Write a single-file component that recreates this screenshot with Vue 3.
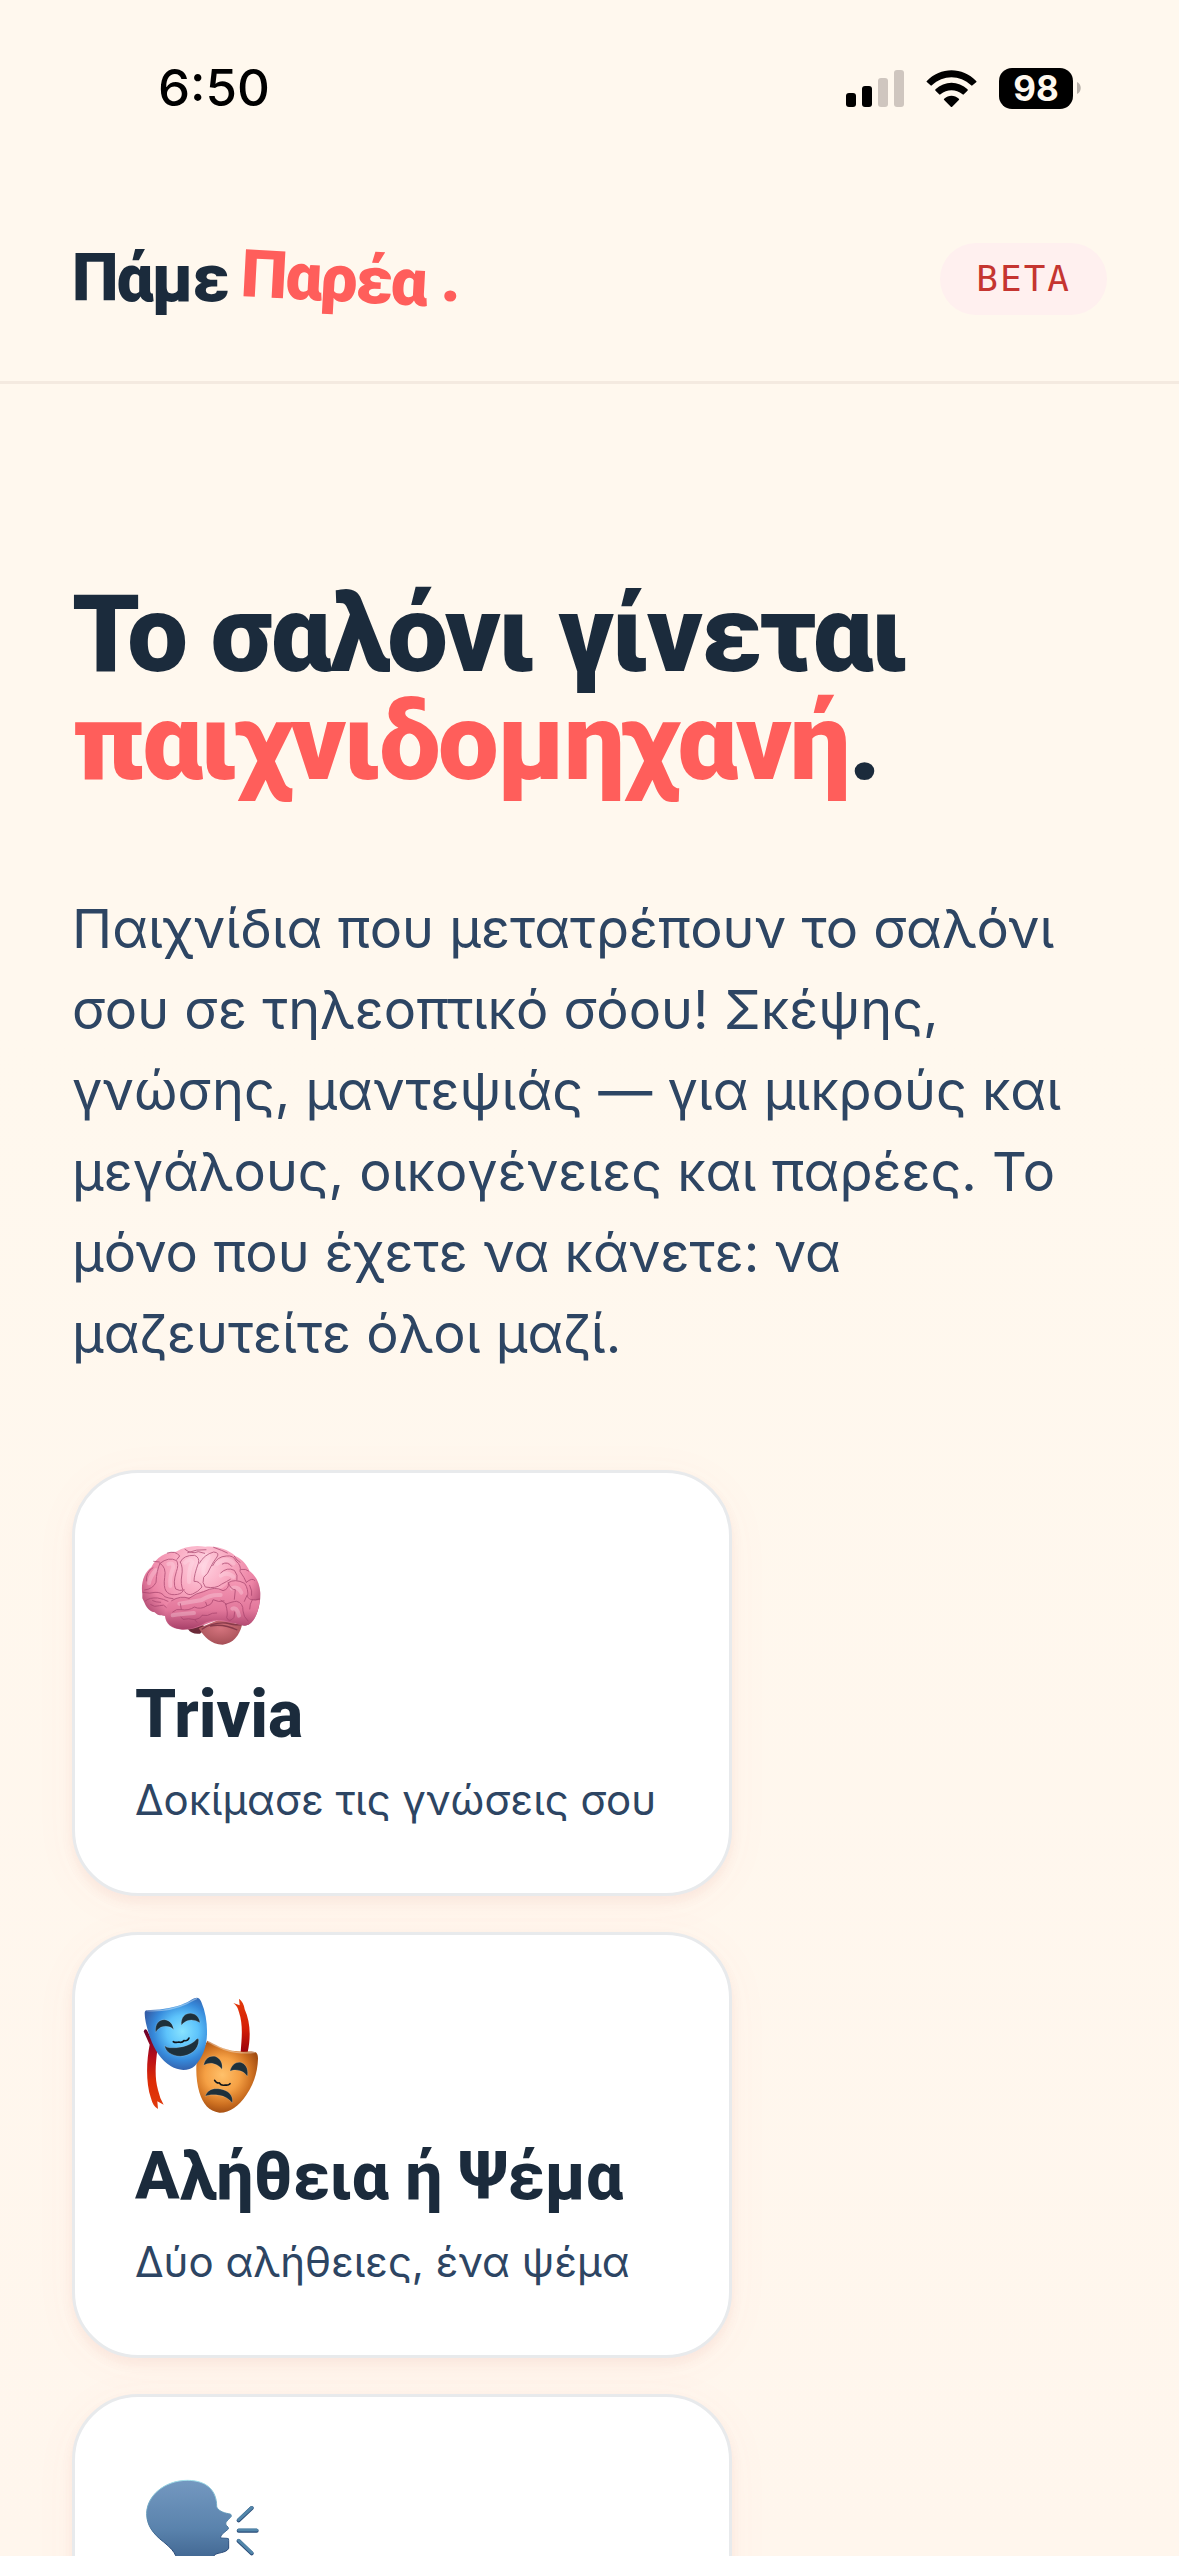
<template>
  <div class="page">
    <div class="status-bar">
      <span class="time">6:50</span>
      <div class="status-icons">
        <svg
          class="signal"
          viewBox="0 0 58 37"
        >
          <rect x="0" y="23" width="10" height="14" rx="3" />
          <rect x="16" y="16" width="10" height="21" rx="3" />
          <rect x="32" y="8" width="10" height="29" rx="3" class="dim" />
          <rect x="48" y="0" width="10" height="37" rx="3" class="dim" />
        </svg>
        <svg
          class="wifi"
          viewBox="0 0 150 111"
        >
          <path d="M1 33C42 -10 108 -10 149 33Q151 35 149 37L138 46Q136 48 134 46C100 14 50 14 16 46Q14 48 12 46L1 36Q-1 35 1 33Z" />
          <path d="M27 58C54 32 96 32 123 58Q125 60 123 62L112 73Q110 75 108 73C88 57 62 57 42 73Q40 75 38 73L27 62Q25 60 27 58Z" />
          <path d="M53 86C66 74 84 74 97 86Q99 88 97 90L77 110Q75 112 73 110L53 90Q51 88 53 86Z" />
        </svg>
        <div class="battery">
          <span class="battery-level">98</span>
          <svg
            class="battery-tip"
            viewBox="0 0 4 12"
          >
            <path d="M0 0C5 2 5 10 0 12Z" />
          </svg>
        </div>
      </div>
    </div>

    <header class="header">
      <a
        href="#"
        class="logo"
      >
        <span>Πάμε</span>
        <span class="logo-tilt">Παρέα</span>
        <span class="logo-dot">.</span>
      </a>
      <span class="badge">BETA</span>
    </header>

    <main class="hero">
      <h1 class="title">
        Το σαλόνι γίνεται<br>
        <span class="accent">παιχνιδομηχανή</span>.
      </h1>
      <p class="lead">
        Παιχνίδια που μετατρέπουν το σαλόνι σου σε τηλεοπτικό σόου! Σκέψης, γνώσης, μαντεψιάς — για μικρούς και μεγάλους, οικογένειες και παρέες. Το μόνο που έχετε να κάνετε: να μαζευτείτε όλοι μαζί.
      </p>

      <div class="games">
        <article
          v-for="game in games"
          :key="game.id"
          class="game-card"
        >
          <svg
            v-if="game.id === 'trivia'"
            class="game-icon"
            viewBox="45 39 378 360"
          >
            <defs>
              <radialGradient id="brain-fill" gradientUnits="userSpaceOnUse" cx="245" cy="135" r="215">
                <stop offset="0" stop-color="#ffd3e1" />
                <stop offset="0.4" stop-color="#f9a9c1" />
                <stop offset="0.75" stop-color="#ec83a5" />
                <stop offset="1" stop-color="#b04a72" />
              </radialGradient>
              <linearGradient id="lobe-fill" x1="0" y1="0" x2="0" y2="1">
                <stop offset="0" stop-color="#f597b4" />
                <stop offset="0.6" stop-color="#e2779b" />
                <stop offset="1" stop-color="#a84069" />
              </linearGradient>
              <radialGradient id="stem-fill" cx="0.5" cy="0.35" r="0.65">
                <stop offset="0" stop-color="#d5747e" />
                <stop offset="1" stop-color="#a54f56" />
              </radialGradient>
            </defs>
            <path d="M204 328Q215 344 240 341L262 322L240 312Z" fill="#6b2a38" />
            <path d="M236 325C252 350 272 374 308 374C340 371 358 346 366 316L300 298Z" fill="url(#stem-fill)" />
            <path d="M245 328Q278 306 318 309Q350 317 365 314M270 318Q310 310 352 330" fill="none" stroke="#87394a" stroke-width="4" />
            <path d="M67 222C62 190 72 158 94 142C108 112 138 95 168 95C192 80 225 74 256 80C290 77 323 87 346 108C370 119 382 138 388 152C410 170 419 190 421 218C422 254 412 288 394 306C384 318 371 320 362 314C342 310 310 302 290 302C258 309 230 330 186 329C154 326 137 312 135 288C119 288 110 284 104 277C82 275 76 253 67 235Z" fill="url(#brain-fill)" />
            <path d="M155 242C178 228 205 236 218 229C236 218 258 206 285 207C306 210 314 200 325 188C340 178 368 184 378 202C386 218 384 232 396 240C416 244 420 236 419 244C415 275 406 300 389 312C372 324 355 307 330 307C302 296 280 300 259 307C230 324 196 333 169 325C139 313 130 283 139 263C141 252 146 246 155 242Z" fill="url(#lobe-fill)" />
            <g class="brain-glow">
              <path d="M145 132Q160 126 160 142Q148 170 151 198M195 128Q209 113 217 126Q205 150 207 186M253 106Q268 100 265 114Q248 137 250 161M292 131Q320 109 341 130M302 167Q321 153 341 171" />
              <path d="M108 150Q90 169 87 190M178 251Q215 245 245 240Q270 223 302 225M335 205Q354 197 364 218M337 266Q350 259 357 287M158 286Q185 281 222 279" />
            </g>
            <g class="brain-folds">
              <path d="M79 183Q77 157 99 143M74 210Q99 207 108 187Q110 150 120 130" />
              <path d="M120 130Q146 109 170 122Q177 135 169 155Q158 190 167 207Q177 214 193 210M120 130Q140 142 134 172Q130 200 138 213Q147 225 163 224Q183 224 189 213" />
              <path d="M181 126Q190 105 224 106Q240 113 235 130Q222 165 222 184Q240 183 246 201Q235 215 218 222Q203 228 194 215M181 126Q190 142 185 168Q181 193 189 210" />
              <path d="M238 130Q252 104 281 96Q300 98 291 111Q280 125 272 141Q264 163 251 172Q245 189 256 201Q288 207 304 193Q321 184 331 178" />
              <path d="M278 137Q291 109 319 108Q340 105 348 123Q365 137 360 154Q374 174 379 187M302 159Q321 140 343 151Q355 165 351 180M307 132Q323 123 335 139" />
              <path d="M118 126L101 124M142 99Q167 91 179 108L171 118M195 88Q214 104 235 95L254 100M203 98Q229 87 258 89M281 82Q309 92 322 99M343 109Q350 122 360 127M363 148Q379 146 386 153M379 187Q396 172 404 181" />
              <path d="M69 217Q91 222 105 217Q126 216 134 230Q146 235 159 236M77 242Q89 232 113 234Q132 237 144 244M92 254Q103 263 119 257Q132 251 139 262M98 242Q107 247 122 247" />
              <path d="M155 242Q182 225 207 235M207 235Q228 219 251 215Q285 197 309 212Q328 207 325 188Q345 175 374 190Q386 207 383 231Q390 245 419 237" />
              <path d="M158 276Q169 265 184 269L181 251M184 269Q206 273 223 261Q242 270 261 257L257 247M261 257Q276 255 279 239Q296 248 312 243M190 298Q205 294 224 299Q241 297 247 286M224 299L231 307M247 286Q263 290 277 280L290 279M183 292L190 298" />
              <path d="M325 188Q332 210 346 209L343 238M317 253Q339 244 350 244Q370 249 369 273Q370 290 384 303M317 253Q325 279 320 293Q328 310 342 292L344 276M373 244L381 226M303 241L320 253M397 239Q389 252 389 267M389 196Q398 214 395 226" />
            </g>
          </svg>

          <svg
            v-else-if="game.id === 'lies'"
            class="game-icon"
            viewBox="45 75 378 360"
          >
            <defs>
              <radialGradient id="blue-mask" gradientUnits="userSpaceOnUse" cx="187" cy="184" r="120">
                <stop offset="0" stop-color="#88e3ff" />
                <stop offset="0.4" stop-color="#5dc3fb" />
                <stop offset="0.72" stop-color="#3689da" />
                <stop offset="1" stop-color="#345ea8" />
              </radialGradient>
              <radialGradient id="gold-mask" gradientUnits="userSpaceOnUse" cx="307" cy="315" r="116">
                <stop offset="0" stop-color="#ffc16b" />
                <stop offset="0.45" stop-color="#f5a044" />
                <stop offset="0.75" stop-color="#cf7222" />
                <stop offset="1" stop-color="#a34d12" />
              </radialGradient>
              <linearGradient id="ribbon-left" x1="0" y1="0" x2="0" y2="1">
                <stop offset="0" stop-color="#66002b" />
                <stop offset="0.35" stop-color="#b70e19" />
                <stop offset="0.65" stop-color="#dd2c06" />
                <stop offset="1" stop-color="#e13b0d" />
              </linearGradient>
              <linearGradient id="ribbon-right" x1="0" y1="0" x2="0" y2="1">
                <stop offset="0" stop-color="#e33b0b" />
                <stop offset="0.55" stop-color="#d51e05" />
                <stop offset="1" stop-color="#98000d" />
              </linearGradient>
            </defs>
            <path d="M71 184Q75 174 81 181L112 240C107 280 103 321 114 360Q119 384 131 404L112 394L114 417Q99 410 93 385C76 334 80 270 89 224Z" fill="url(#ribbon-left)" />
            <path d="M340 99L359 106L357 86Q371 96 374 118C391 155 393 201 383 247H362C365 206 370 165 357 127Q353 108 340 99Z" fill="url(#ribbon-right)" />
            <path d="M262 212C283 221 307 240 353 244C374 247 400 242 409 248Q414 252 414 266C413 305 401 344 379 375C356 410 328 429 298 428C267 424 249 403 238 367C230 341 227 301 230 276Z" fill="url(#gold-mask)" />
            <path d="M74 129Q74 119 86 120C123 121 168 112 194 100C211 92 222 83 230 83Q239 83 244 96C257 126 262 160 261 193C260 229 248 265 225 287C205 305 174 302 153 289C123 271 103 239 91 205C81 176 74 148 74 129Z" fill="url(#blue-mask)" />
            <path d="M80 122C126 125 172 114 200 101Q224 88 231 85M263 214C285 227 314 243 350 247Q377 250 406 247" fill="none" stroke="#ffffff" stroke-opacity="0.38" stroke-width="4" />
            <g class="mask-face">
              <path d="M107 187C104 159 119 148 134 149C151 151 159 164 161 179Q152 169 137 169C121 169 113 178 107 187Z" />
              <path d="M184 166C182 140 197 129 213 130C230 132 238 144 240 158Q228 150 214 150C199 151 191 157 184 166Z" />
              <path d="M134 227Q140 233 149 233C180 235 212 228 230 207Q236 202 236 211C236 239 212 257 181 259C153 257 137 244 134 227Z" />
              <path d="M251 286C255 264 270 256 285 259C302 265 309 282 306 298Q296 284 281 281C269 278 260 281 251 286Z" />
              <path d="M330 304C335 282 350 274 365 278C382 285 385 304 382 319Q374 306 360 302C348 299 339 299 330 304Z" />
              <path d="M256 379C261 360 279 353 300 357C326 361 341 377 337 399Q321 379 297 376C279 373 264 375 256 379Z" />
            </g>
            <path d="M160 215Q167 219 177 216Q186 219 192 212Q203 214 207 204M284 331Q289 340 298 339Q304 348 315 345Q325 347 330 341" class="mask-nose" />
          </svg>

          <svg
            v-else
            class="game-icon"
            viewBox="45 21 378 360"
          >
            <defs>
              <linearGradient id="head-fill" x1="0" y1="0" x2="0" y2="1">
                <stop offset="0" stop-color="#7498c0" />
                <stop offset="0.5" stop-color="#5a83ad" />
                <stop offset="1" stop-color="#345783" />
              </linearGradient>
              <linearGradient id="head-edge" x1="0" y1="0" x2="0" y2="1">
                <stop offset="0" stop-color="#a1dfea" />
                <stop offset="0.35" stop-color="#6297b8" />
                <stop offset="0.7" stop-color="#264776" />
              </linearGradient>
            </defs>
            <path d="M202 91C132 91 80 139 80 191C80 225 98 251 131 276Q161 300 167 317L170 379H282V317C289 306 318 311 326 295L326 271Q327 264 321 265L302 264Q300 259 308 251L325 237Q327 232 319 226Q313 219 326 208L334 199Q335 191 326 191C310 189 291 180 290 169C290 119 258 91 202 91Z" fill="url(#head-fill)" stroke="url(#head-edge)" stroke-width="3" />
            <g class="speech">
              <path d="M356 211L395 174M356 242H410M356 273L395 310" class="speech-shade" />
              <path d="M356 209L395 173M356 240H410M356 271L395 308" />
            </g>
          </svg>

          <h2
            v-if="game.title"
            class="game-title"
          >
            {{ game.title }}
          </h2>
          <p
            v-if="game.text"
            class="game-text"
          >
            {{ game.text }}
          </p>
        </article>
      </div>
    </main>
  </div>
</template>

<script setup>
const games = [
  { id: "trivia", title: "Trivia", text: "Δοκίμασε τις γνώσεις σου" },
  { id: "lies", title: "Αλήθεια ή Ψέμα", text: "Δύο αλήθειες, ένα ψέμα" },
  { id: "talk" },
];
</script>

<style>
body {
  margin: 0;
  background-color: #fff8ee;
}
</style>

<style scoped>
.page {
  height: 100vh;
  overflow: hidden;
  background: linear-gradient(#fff8ee 40%, #fff6ed);
  color: #1b2b3c;
  font-family: Inter, "Noto Sans", sans-serif;
}

.status-bar {
  display: flex;
  align-items: center;
  justify-content: space-between;
  height: 176px;
  padding: 0 98px 0 158px;
  box-sizing: border-box;
  color: #000000;
}

.time {
  font-size: 51px;
  font-weight: 500;
  line-height: 60px;
}

.status-icons {
  display: flex;
  align-items: center;
  gap: 22px;
}

.signal {
  width: 58px;
  height: 37px;
}

.dim {
  fill: #cfc6bf;
}

.wifi {
  width: 51px;
  height: 37px;
}

.battery {
  display: flex;
  align-items: center;
  gap: 4px;
}

.battery-level {
  width: 74px;
  border-radius: 13px;
  background-color: #000000;
  color: #fff8ee;
  font-size: 35px;
  font-weight: 700;
  line-height: 41px;
  text-align: center;
}

.battery-tip {
  width: 4px;
  height: 12px;
  fill: #b8b1aa;
}

.header {
  display: flex;
  align-items: center;
  justify-content: space-between;
  height: 208px;
  padding: 0 72px;
  box-sizing: border-box;
  border-bottom: 3px solid #f4eae0;
}

.logo {
  display: flex;
  align-items: baseline;
  gap: 14px;
  color: #1b2b3c;
  font-family: Roboto, sans-serif;
  font-size: 66px;
  font-weight: 900;
  letter-spacing: -2px;
  line-height: 72px;
  text-decoration: none;
}

.logo-tilt {
  display: inline-block;
  color: #ff5e5b;
  transform: rotate(3deg);
}

.logo-dot {
  color: #ff5e5b;
}

.badge {
  padding: 0 36px;
  border-radius: 36px;
  background-color: #fff0ef;
  color: #c53530;
  font-family: "DejaVu Sans Mono", monospace;
  font-size: 36px;
  letter-spacing: 2px;
  line-height: 72px;
}

.hero {
  padding: 196px 72px 0;
}

.title {
  margin: 0;
  font-family: Roboto, sans-serif;
  font-size: 108px;
  font-weight: 900;
  letter-spacing: -2px;
  line-height: 108px;
}

.accent {
  color: #ff5e5b;
}

.lead {
  margin: 92px 0 96px;
  color: #2d4563;
  font-size: 54px;
  line-height: 81px;
}

.games {
  display: flex;
  flex-direction: column;
  align-items: flex-start;
  gap: 36px;
}

.game-card {
  width: 660px;
  max-width: 100%;
  min-height: 426px;
  padding: 60px;
  box-sizing: border-box;
  border: 3px solid #e8eaec;
  border-radius: 66px;
  background-color: #ffffff;
  box-shadow: 0 6px 12px rgba(180, 70, 50, 0.07), 0 6px 48px rgba(255, 94, 91, 0.04);
}

.game-icon {
  display: block;
  width: 126px;
  height: 120px;
}

.brain-glow {
  fill: none;
  stroke: #ffe4ed;
  stroke-width: 12;
  stroke-linecap: round;
  opacity: 0.3;
}

.brain-folds {
  fill: none;
  stroke: #a5426b;
  stroke-width: 3;
  stroke-linecap: round;
  stroke-linejoin: round;
  opacity: 0.7;
}

.mask-face {
  fill: #1d303b;
  stroke: #ffffff;
  stroke-opacity: 0.25;
  stroke-width: 2;
}

.mask-nose {
  fill: none;
  stroke: #10151b;
  stroke-width: 5;
  stroke-linecap: round;
}

.speech {
  fill: none;
  stroke: #5286aa;
  stroke-width: 9;
  stroke-linecap: round;
}

.speech-shade {
  stroke: #294b78;
  stroke-width: 12;
}

.game-title {
  margin: 20px 0 0;
  font-family: Roboto, sans-serif;
  font-size: 66px;
  font-weight: 800;
  line-height: 84px;
}

.game-text {
  margin: 10px 0 0;
  color: #2d4563;
  font-size: 42px;
  line-height: 66px;
}
</style>
